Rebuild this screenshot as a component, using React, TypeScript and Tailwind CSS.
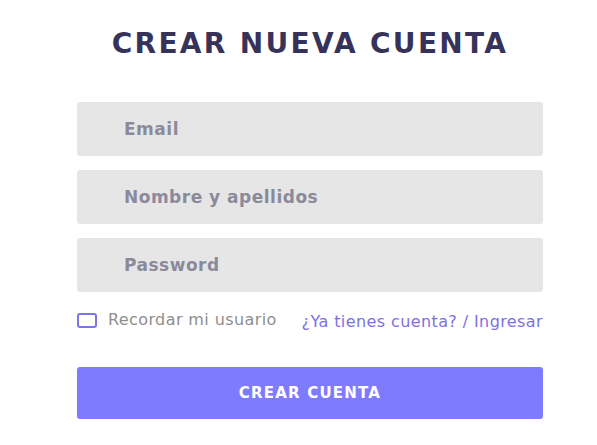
import { useState } from "react";

export default function App() {
  const [remember, setRemember] = useState(false);

  const inputClass =
    "w-full h-[54px] rounded-[3px] bg-[#e6e6e6] pl-[47px] text-[17px] font-bold tracking-[0.5px] text-[#55526a] placeholder-[#8b8a9b] outline-none";

  return (
    <div className="min-h-[445px] w-full bg-white font-['DejaVu_Sans',sans-serif]">
      <div className="ml-[77px] w-[466px] pt-[23px]">
        <h1 className="text-center text-[28px] font-bold tracking-[2.3px] text-[#363259]">
          CREAR NUEVA CUENTA
        </h1>

        <form className="mt-[37px]" onSubmit={(e) => e.preventDefault()}>
          <div className="flex flex-col gap-[14px]">
            <input type="email" placeholder="Email" className={inputClass} />
            <input type="text" placeholder="Nombre y apellidos" className={inputClass} />
            <input type="password" placeholder="Password" className={inputClass} />
          </div>

          <div className="mt-[16px] flex items-start justify-between">
            <label className="flex items-center gap-[11px] text-[16px] tracking-[0.4px] text-[#8e8e8e]">
              <input
                type="checkbox"
                checked={remember}
                onChange={() => setRemember(!remember)}
                className="h-[15px] w-[20px] appearance-none rounded-[3px] border-2 border-[#7b75e6] bg-white"
              />
              Recordar mi usuario
            </label>
            <a href="#" className="mt-[2px] text-[16px] tracking-[0.4px] text-[#7d70e3]">
              ¿Ya tienes cuenta? / Ingresar
            </a>
          </div>

          <button
            type="submit"
            className="mt-[33px] h-[52px] w-full rounded-[3px] bg-[#7f7bfe] text-[15px] font-bold tracking-[1.2px] text-white"
          >
            CREAR CUENTA
          </button>
        </form>
      </div>
    </div>
  );
}
